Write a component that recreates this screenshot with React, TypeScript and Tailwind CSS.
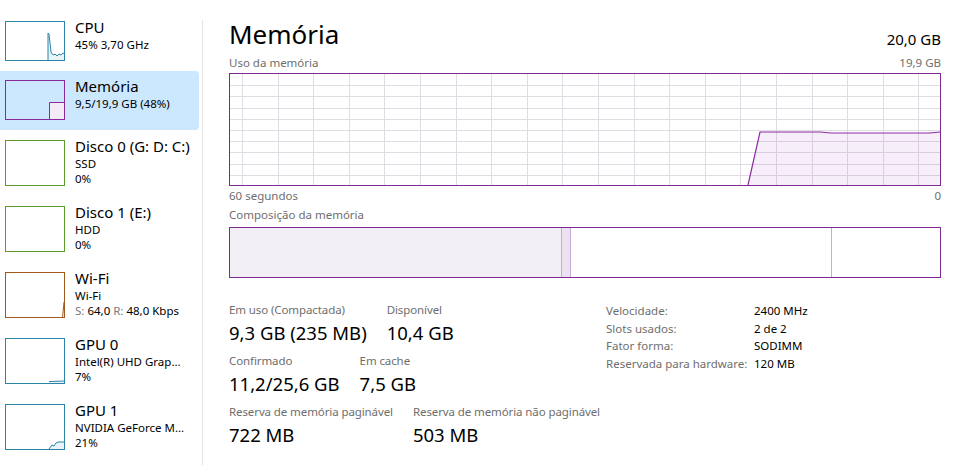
import React from 'react';

const FONT = { fontFamily: '"Segoe UI", "Noto Sans", "Open Sans", sans-serif' };

type Thumb = 'cpu' | 'mem' | 'disk' | 'wifi' | 'gpu0' | 'gpu1';

interface Device {
  id: string;
  title: string;
  lines: React.ReactNode[];
  thumb: Thumb;
  color: string;
  selected?: boolean;
}

const devices: Device[] = [
  { id: 'cpu', title: 'CPU', lines: ['45% 3,70 GHz'], thumb: 'cpu', color: '#2b84a8' },
  { id: 'mem', title: 'Memória', lines: ['9,5/19,9 GB (48%)'], thumb: 'mem', color: '#8a2aa0', selected: true },
  { id: 'disk0', title: 'Disco 0 (G: D: C:)', lines: ['SSD', '0%'], thumb: 'disk', color: '#5c9a2c' },
  { id: 'disk1', title: 'Disco 1 (E:)', lines: ['HDD', '0%'], thumb: 'disk', color: '#5c9a2c' },
  {
    id: 'wifi',
    title: 'Wi-Fi',
    lines: [
      'Wi-Fi',
      <span key="s">
        <span className="text-[#7a7a7a]">S:</span> 64,0 <span className="text-[#7a7a7a]">R:</span> 48,0 Kbps
      </span>,
    ],
    thumb: 'wifi',
    color: '#a0581a',
  },
  { id: 'gpu0', title: 'GPU 0', lines: ['Intel(R) UHD Grap...', '7%'], thumb: 'gpu0', color: '#2b84a8' },
  { id: 'gpu1', title: 'GPU 1', lines: ['NVIDIA GeForce M...', '21%'], thumb: 'gpu1', color: '#2b84a8' },
];

const Thumbnail: React.FC<{ kind: Thumb; color: string; h: number }> = ({ kind, color, h }) => {
  const b = h; // bottom
  let content: React.ReactNode = null;
  if (kind === 'cpu') {
    const pts = `43,${b} 43,12 44,13 46,31 47,33 49,34 50,33 52,35 54,33 56,34 58,32 60,33`;
    content = (
      <>
        <polygon points={`${pts} 60,${b}`} fill="#e9f3f8" />
        <polyline points={pts} fill="none" stroke={color} strokeWidth="1" />
      </>
    );
  } else if (kind === 'mem') {
    content = <path d={`M44.5,${b} V22.5 H60 V${b} Z`} fill="#f3ecf6" stroke={color} strokeWidth="1" />;
  } else if (kind === 'wifi') {
    content = <polyline points={`57.5,${b} 59,30`} fill="none" stroke={color} strokeWidth="1" />;
  } else if (kind === 'gpu0') {
    content = (
      <>
        <rect x="44" y="43" width="16" height="3" fill="#eaf3f8" />
        <polyline points="44,43.5 60,43" fill="none" stroke={color} strokeWidth="1" />
      </>
    );
  } else if (kind === 'gpu1') {
    const pts = '44,45 47,41 49,42 51,39 53,38 60,38';
    content = (
      <>
        <polygon points={`${pts} 60,${b} 44,${b}`} fill="#eaf3f8" />
        <polyline points={pts} fill="none" stroke={color} strokeWidth="1" />
      </>
    );
  }
  return (
    <svg width="60" height={h} className="shrink-0 block">
      {content}
      <rect x="0.5" y="0.5" width="59" height={h - 1} fill="none" stroke={color} strokeWidth="1" />
    </svg>
  );
};

const DeviceItem: React.FC<{ d: Device }> = ({ d }) => {
  const tall = d.lines.length > 1;
  return (
    <div
      className={`flex items-start pl-[5px] rounded-r-sm ${tall ? 'h-[66px] pt-[10px]' : 'h-[59px] pt-[9px]'} ${
        d.selected ? 'bg-[#cce8ff]' : ''
      }`}
    >
      <Thumbnail kind={d.thumb} color={d.color} h={tall ? 46 : 40} />
      <div className="ml-[10px] -mt-[3px] text-black">
        <div className="text-[15px] leading-[19px]">{d.title}</div>
        {d.lines.map((l, i) => (
          <div key={i} className="text-[11.5px] leading-[15px] whitespace-nowrap">
            {l}
          </div>
        ))}
      </div>
    </div>
  );
};

const UsageGraph: React.FC = () => {
  const W = 710;
  const H = 111;
  const vx: number[] = [];
  for (let x = 12; x < W; x += 35.6) vx.push(Math.round(x) + 0.5);
  const hy: number[] = [];
  for (let k = 1; k < 10; k++) hy.push(Math.round(k * 11.2) + 0.5);
  const pts = '518,111 530,58 591,58 600,59 700,59 710,58';
  return (
    <div className="border border-[#7e2a92] w-[712px] h-[113px]">
      <svg width={W} height={H} className="block">
        {vx.map((x) => (
          <line key={`v${x}`} x1={x} y1={0} x2={x} y2={H} stroke="#e1dce4" strokeWidth="1" />
        ))}
        {hy.map((y) => (
          <line key={`h${y}`} x1={0} y1={y} x2={W} y2={y} stroke="#e1dce4" strokeWidth="1" />
        ))}
        <polygon points={`${pts} 710,111`} fill="#8b2aa0" fillOpacity="0.08" />
        <polyline points={pts} fill="none" stroke="#8b2aa0" strokeWidth="1.2" />
      </svg>
    </div>
  );
};

const CompositionBar: React.FC = () => (
  <div className="border border-[#7e2a92] w-[712px] h-[51px] flex">
    <div className="w-[332px] bg-[#f2eff4] border-r border-[#c9a9d8]" />
    <div className="w-[9px] bg-[#ebe2f1] border-r border-[#c9a9d8]" />
    <div className="w-[261px] bg-white border-r border-[#bfb2c6]" />
    <div className="flex-1 bg-white" />
  </div>
);

const Stat: React.FC<{ label: string; value: string }> = ({ label, value }) => (
  <div>
    <div className="text-[11.5px] leading-[16px] text-[#6e6e6e] whitespace-nowrap tracking-[-0.1px]">{label}</div>
    <div className="text-[18.5px] leading-[24px] text-black whitespace-nowrap mt-[3px]">{value}</div>
  </div>
);

const specs = [
  ['Velocidade:', '2400 MHz'],
  ['Slots usados:', '2 de 2'],
  ['Fator forma:', 'SODIMM'],
  ['Reservada para hardware:', '120 MB'],
];

export default function App() {
  return (
    <div className="w-[959px] h-[465px] bg-white flex overflow-hidden" style={FONT}>
      {/* Sidebar */}
      <div className="w-[203px] shrink-0 pt-[12px] flex">
        <div className="w-[199px]">
          {devices.map((d) => (
            <DeviceItem key={d.id} d={d} />
          ))}
        </div>
        <div className="ml-[3px] mt-[8px] w-px bg-[#e3e3e3] self-stretch" />
      </div>

      {/* Main */}
      <div className="flex-1 pl-[26px] pr-[18px]">
        <div className="flex items-end justify-between h-[50px]">
          <div className="text-[26px] leading-[32px] text-black">Memória</div>
          <div className="text-[15px] leading-[20px] text-black mb-[1px]">20,0 GB</div>
        </div>
        <div className="flex justify-between text-[11.5px] leading-[16px] text-[#6e6e6e] mt-[5px] mb-[2px]">
          <span>Uso da memória</span>
          <span>19,9 GB</span>
        </div>
        <UsageGraph />
        <div className="flex justify-between text-[11.5px] leading-[16px] text-[#6e6e6e] mt-[2px]">
          <span>60 segundos</span>
          <span>0</span>
        </div>
        <div className="text-[11.5px] leading-[16px] text-[#6e6e6e] mt-[3px] mb-[4px]">Composição da memória</div>
        <CompositionBar />

        <div className="flex mt-[24px]">
          <div className="w-[377px] shrink-0 flex flex-col gap-[8px]">
            <div className="flex gap-[20px]">
              <Stat label="Em uso (Compactada)" value="9,3 GB (235 MB)" />
              <Stat label="Disponível" value="10,4 GB" />
            </div>
            <div className="flex gap-[20px]">
              <Stat label="Confirmado" value="11,2/25,6 GB" />
              <Stat label="Em cache" value="7,5 GB" />
            </div>
            <div className="flex gap-[20px]">
              <Stat label="Reserva de memória paginável" value="722 MB" />
              <Stat label="Reserva de memória não paginável" value="503 MB" />
            </div>
          </div>
          <div className="text-[11.5px] leading-[17.7px]">
            {specs.map(([k, v]) => (
              <div key={k} className="flex">
                <span className="w-[148px] text-[#6e6e6e]">{k}</span>
                <span className="text-black">{v}</span>
              </div>
            ))}
          </div>
        </div>
      </div>
    </div>
  );
}
